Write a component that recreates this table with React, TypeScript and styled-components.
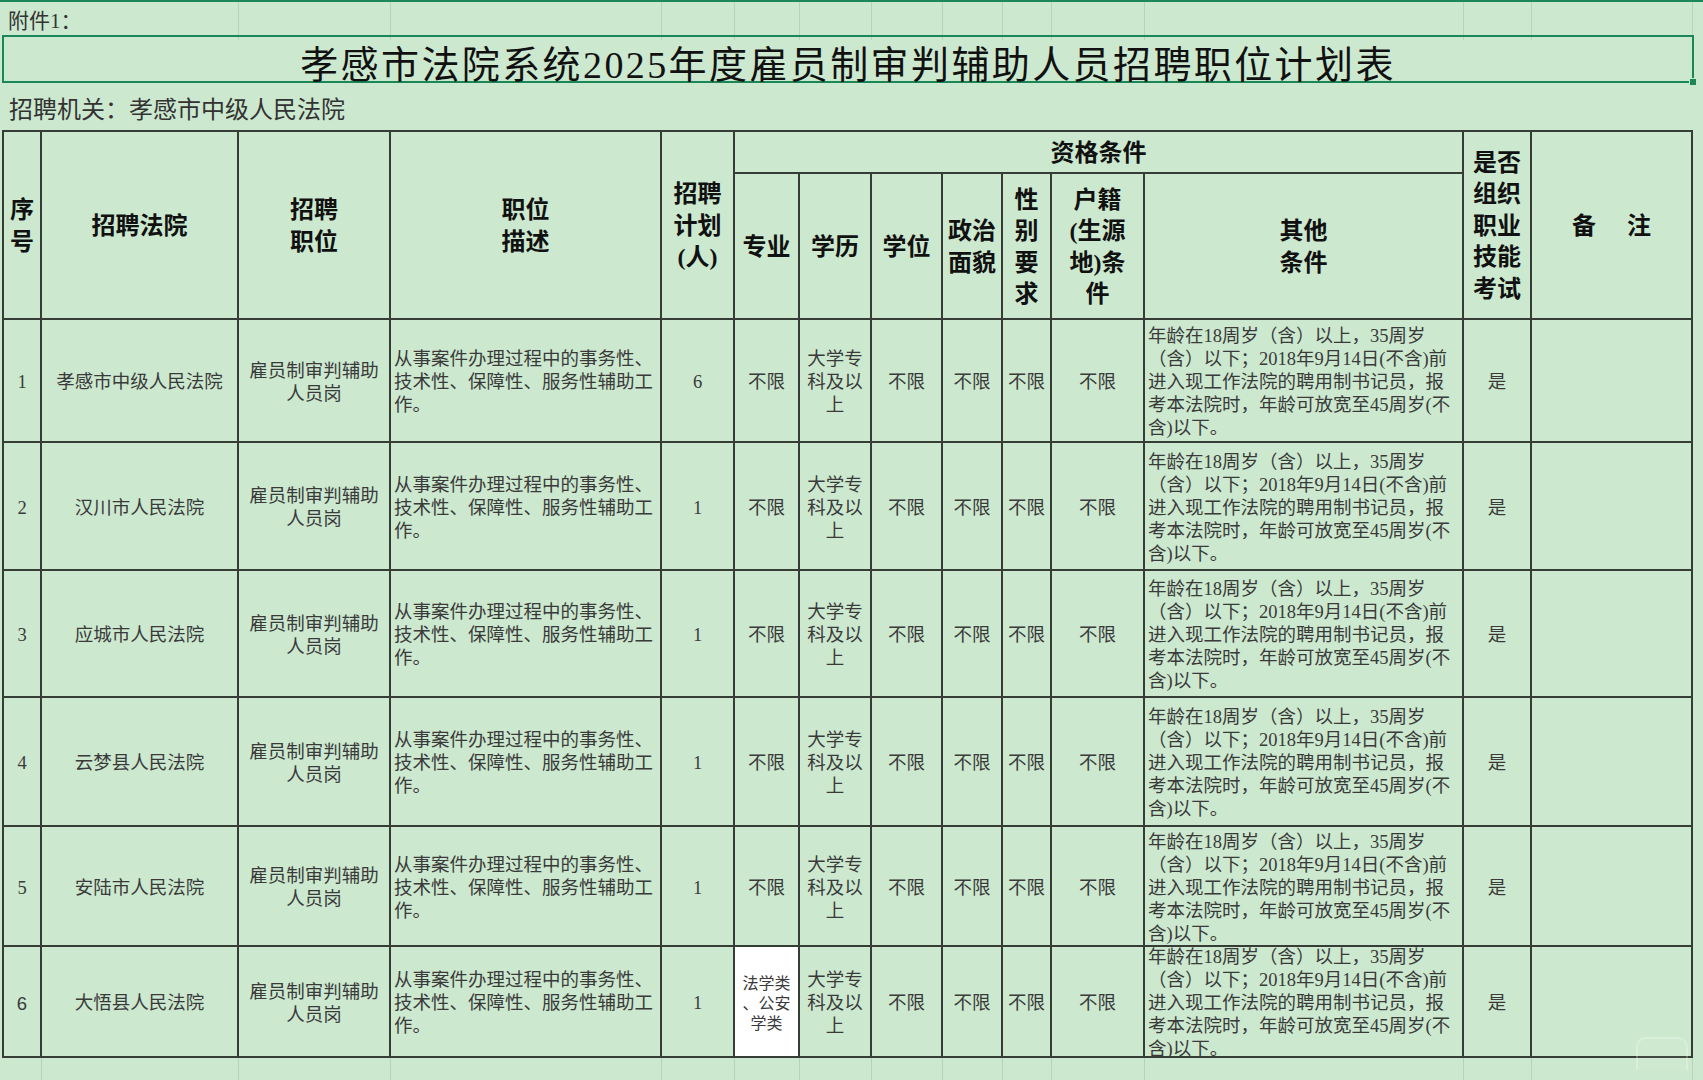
import React from "react";
import styled, { createGlobalStyle } from "styled-components";

const BG = "#cce8cf";
const LINE = "#363c36";
const FAINT = "#b7d2ba";
const GREEN = "#1b8657";

// column widths measured from the sheet, first one is after the 2px outer border
const COLS =
	"38px 197px 152px 271px 73px 65px 72px 71px 60px 49px 93px 319px 68px 161px";
const ROWS = "42px 146px 123px 128px 127px 129px 120px 111px";

const GlobalStyle = createGlobalStyle`
	html, body {
		margin: 0;
		padding: 0;
		background: ${BG};
	}
	body {
		font-family: "Liberation Serif", "Noto Sans CJK SC", serif;
	}
`;

const Page = styled.div`
	position: relative;
	width: 1703px;
	height: 1080px;
	box-sizing: border-box;
	overflow: hidden;
	background: ${BG};
	border-top: 2px solid ${GREEN};
`;

const GridStrip = styled.div<{ $h: number }>`
	display: grid;
	grid-template-columns: ${COLS};
	height: ${(p) => p.$h}px;
	margin-left: 4px;
`;

const FaintCell = styled.div<{ $span?: number }>`
	grid-column: span ${(p) => p.$span || 1};
	border-right: 1px solid ${FAINT};
	box-sizing: border-box;
	overflow: visible;
	white-space: nowrap;
`;

const NoteText = styled.span`
	display: block;
	padding-left: 4px;
	font-size: 21px;
	line-height: 38px;
	color: #333;
`;

const TitleBox = styled.div`
	position: relative;
	margin-left: 2px;
	width: 1692px;
	height: 48px;
	box-sizing: border-box;
	border: 2px solid ${GREEN};
	display: flex;
	align-items: center;
	justify-content: center;
	padding-top: 4px;
	font-size: 38px;
	color: #111;
	letter-spacing: 2.4px;
`;

const Handle = styled.span`
	position: absolute;
	right: -5px;
	bottom: -5px;
	width: 6px;
	height: 6px;
	background: ${GREEN};
	border: 1px solid ${BG};
`;

const SubTitle = styled.div`
	height: 47px;
	display: flex;
	align-items: center;
	padding-left: 9px;
	padding-top: 2px;
	box-sizing: border-box;
	font-size: 24px;
	color: #333;
`;

const Table = styled.div`
	display: grid;
	grid-template-columns: ${COLS};
	grid-template-rows: ${ROWS};
	width: fit-content;
	margin-left: 2px;
	border-top: 2px solid ${LINE};
	border-left: 2px solid ${LINE};
`;

const Cell = styled.div<{
	$rowSpan?: number;
	$colSpan?: number;
	$left?: boolean;
	$white?: boolean;
}>`
	grid-row: span ${(p) => p.$rowSpan || 1};
	grid-column: span ${(p) => p.$colSpan || 1};
	display: flex;
	flex-direction: column;
	justify-content: center;
	align-items: ${(p) => (p.$left ? "flex-start" : "center")};
	text-align: ${(p) => (p.$left ? "left" : "center")};
	padding-left: ${(p) => (p.$left ? "3px" : "0")};
	box-sizing: border-box;
	overflow: hidden;
	border-right: 2px solid ${LINE};
	border-bottom: 2px solid ${LINE};
	background: ${(p) => (p.$white ? "#fff" : "transparent")};
`;

const HeadText = styled.div`
	display: flex;
	flex-direction: column;
	align-items: center;
	padding-top: 3px;
	font-size: 24px;
	font-weight: 600;
	line-height: 31.5px;
	color: #111;
`;

const Spaced = styled.span`
	display: flex;
	gap: 31px;
`;

const BodyText = styled.div<{ $small?: boolean; $sans?: boolean }>`
	padding-top: 4px;
	font-size: ${(p) => (p.$small ? "16px" : "18.5px")};
	line-height: ${(p) => (p.$small ? "20px" : "23px")};
	color: #3a3a3a;
	font-family: ${(p) =>
		p.$sans
			? `"Liberation Sans", "Noto Sans CJK SC", sans-serif`
			: `"Liberation Serif", "Noto Sans CJK SC", serif`};
`;

const Line = styled.span`
	display: block;
	white-space: nowrap;
`;

const Watermark = styled.svg`
	position: absolute;
	right: 14px;
	bottom: 10px;
`;

const Lines = ({ items }: { items: string[] }) => (
	<>
		{items.map((t, i) => (
			<Line key={i}>{t}</Line>
		))}
	</>
);

const courts = [
	"孝感市中级人民法院",
	"汉川市人民法院",
	"应城市人民法院",
	"云梦县人民法院",
	"安陆市人民法院",
	"大悟县人民法院",
];
const plans = [6, 1, 1, 1, 1, 1];

const duty = ["从事案件办理过程中的事务性、", "技术性、保障性、服务性辅助工", "作。"];
const other = [
	"年龄在18周岁（含）以上，35周岁",
	"（含）以下；2018年9月14日(不含)前",
	"进入现工作法院的聘用制书记员，报",
	"考本法院时，年龄可放宽至45周岁(不",
	"含)以下。",
];

const subHeads = [
	["专业"],
	["学历"],
	["学位"],
	["政治", "面貌"],
	["性", "别", "要", "求"],
	["户籍", "(生源", "地)条", "件"],
	["其他", "条件"],
];

const App = () => {
	return (
		<Page>
			<GlobalStyle />
			<GridStrip $h={33}>
				<FaintCell $span={2}>
					<NoteText>附件1：</NoteText>
				</FaintCell>
				{Array.from({ length: 12 }).map((_, i) => (
					<FaintCell key={i} />
				))}
			</GridStrip>
			<TitleBox>
				孝感市法院系统2025年度雇员制审判辅助人员招聘职位计划表
				<Handle />
			</TitleBox>
			<SubTitle>招聘机关：孝感市中级人民法院</SubTitle>
			<Table>
				<Cell $rowSpan={2}>
					<HeadText>
						<Lines items={["序", "号"]} />
					</HeadText>
				</Cell>
				<Cell $rowSpan={2}>
					<HeadText>招聘法院</HeadText>
				</Cell>
				<Cell $rowSpan={2}>
					<HeadText>
						<Lines items={["招聘", "职位"]} />
					</HeadText>
				</Cell>
				<Cell $rowSpan={2}>
					<HeadText>
						<Lines items={["职位", "描述"]} />
					</HeadText>
				</Cell>
				<Cell $rowSpan={2}>
					<HeadText>
						<Lines items={["招聘", "计划", "(人)"]} />
					</HeadText>
				</Cell>
				<Cell $colSpan={7}>
					<HeadText>资格条件</HeadText>
				</Cell>
				<Cell $rowSpan={2}>
					<HeadText>
						<Lines items={["是否", "组织", "职业", "技能", "考试"]} />
					</HeadText>
				</Cell>
				<Cell $rowSpan={2}>
					<HeadText>
						<Spaced>
							<span>备</span>
							<span>注</span>
						</Spaced>
					</HeadText>
				</Cell>
				{subHeads.map((h, i) => (
					<Cell key={i}>
						<HeadText>
							<Lines items={h} />
						</HeadText>
					</Cell>
				))}

				{courts.map((court, i) => (
					<React.Fragment key={court}>
						<Cell>
							<BodyText $sans={i === 5}>{i + 1}</BodyText>
						</Cell>
						<Cell>
							<BodyText>{court}</BodyText>
						</Cell>
						<Cell>
							<BodyText>
								<Lines items={["雇员制审判辅助", "人员岗"]} />
							</BodyText>
						</Cell>
						<Cell $left>
							<BodyText>
								<Lines items={duty} />
							</BodyText>
						</Cell>
						<Cell>
							<BodyText>{plans[i]}</BodyText>
						</Cell>
						{i === 5 ? (
							<Cell $white>
								<BodyText $small>
									<Lines items={["法学类", "、公安", "学类"]} />
								</BodyText>
							</Cell>
						) : (
							<Cell>
								<BodyText>不限</BodyText>
							</Cell>
						)}
						<Cell>
							<BodyText>
								<Lines items={["大学专", "科及以", "上"]} />
							</BodyText>
						</Cell>
						<Cell>
							<BodyText>不限</BodyText>
						</Cell>
						<Cell>
							<BodyText>不限</BodyText>
						</Cell>
						<Cell>
							<BodyText>不限</BodyText>
						</Cell>
						<Cell>
							<BodyText>不限</BodyText>
						</Cell>
						<Cell $left>
							<BodyText>
								<Lines items={other} />
							</BodyText>
						</Cell>
						<Cell>
							<BodyText>是</BodyText>
						</Cell>
						<Cell />
					</React.Fragment>
				))}
			</Table>
			<GridStrip $h={22}>
				{Array.from({ length: 14 }).map((_, i) => (
					<FaintCell key={i} />
				))}
			</GridStrip>
			<Watermark width="54" height="34" viewBox="0 0 54 34">
				<rect
					x="2"
					y="2"
					width="50"
					height="40"
					rx="9"
					fill="rgba(255,255,255,0.06)"
					stroke="rgba(255,255,255,0.25)"
					strokeWidth="2"
				/>
			</Watermark>
		</Page>
	);
};

export default App;
